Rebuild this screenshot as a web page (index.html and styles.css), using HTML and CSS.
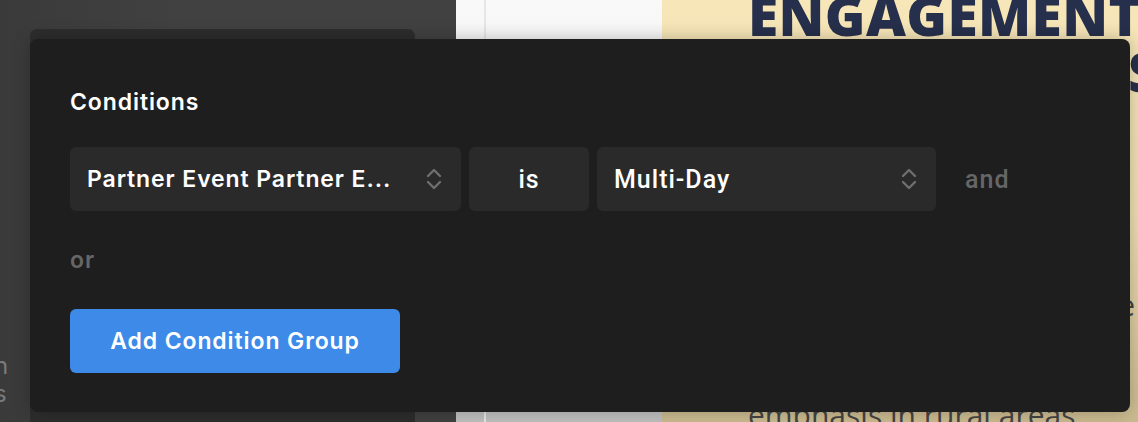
FILE: index.html
```html
<!DOCTYPE html>
<html>
<head>
<meta charset="utf-8">
<link rel="stylesheet" href="styles.css">
</head>
<body>
<div class="page">
  <div class="left">
    <div class="card"></div>
    <div class="left-text"><span>n</span><span>s</span></div>
  </div>
  <div class="white"><div class="rule"></div></div>
  <div class="cream">
    <div class="headline">ENGAGEMENT</div>
    <div class="headline line2">STRATEGIES</div>
    <div class="copy">
      <div class="copy-line l1">programs aim to increase the</div>
      <div class="copy-line l2">participation through outreach to</div>
      <div class="copy-line l3">emphasis in rural areas</div>
    </div>
  </div>
</div>

<div class="modal">
  <h2 class="title">Conditions</h2>
  <div class="cond-row">
    <div class="select field-wide">
      <span class="select-text">Partner Event Partner E...</span>
      <svg class="chev" width="18" height="22" viewBox="0 0 18 22"><path d="M3 8 L9 2 L15 8 M3 14 L9 20 L15 14" fill="none" stroke="#6f6f6f" stroke-width="2.4" stroke-linecap="round" stroke-linejoin="round"/></svg>
    </div>
    <div class="select field-op"><span class="alt-text">is</span></div>
    <div class="select field-val">
      <span class="select-text alt-text">Multi-Day</span>
      <svg class="chev" width="18" height="22" viewBox="0 0 18 22"><path d="M3 8 L9 2 L15 8 M3 14 L9 20 L15 14" fill="none" stroke="#6f6f6f" stroke-width="2.4" stroke-linecap="round" stroke-linejoin="round"/></svg>
    </div>
    <span class="joiner alt-text">and</span>
  </div>
  <div class="or">or</div>
  <button class="add-btn">Add Condition Group</button>
</div>
</body>
</html>
```

FILE: styles.css
```css
* { box-sizing: border-box; }
html, body { margin: 0; padding: 0; }
body {
  width: 1138px;
  height: 422px;
  overflow: hidden;
  position: relative;
  font-family: Inter, "Noto Sans", sans-serif;
}
.page {
  display: grid;
  grid-template-columns: 456px 206px 1fr;
  height: 422px;
}
.left {
  background: linear-gradient(90deg, #3a3a3a 0%, #414141 40%, #414141 100%);
  padding: 29px 41px 0 30px;
  position: relative;
}
.card {
  height: 400px;
  background: #2d2d2d;
  border-radius: 7px;
}
.left-text {
  position: absolute;
  left: -6px;
  top: 352px;
  display: flex;
  flex-direction: column;
  color: #7a7a7a;
  font-size: 24px;
  line-height: 28px;
}
.white {
  background: linear-gradient(180deg, #f9f9f9 0%, #f1f1f1 40%, #d8d8d8 80%, #bdbdbd 100%);
  padding-left: 28px;
}
.rule {
  width: 2px;
  height: 100%;
  background: #e6e6e6;
}
.cream {
  background: linear-gradient(180deg, #f7e6b8 0%, #efdfb2 50%, #c9b98e 100%);
  padding-left: 86px;
  overflow: hidden;
  white-space: nowrap;
}
.headline {
  font-family: "Open Sans", sans-serif;
  font-weight: 800;
  font-size: 55px;
  line-height: 55px;
  color: #262f4b;
  margin-top: -13px;
  letter-spacing: 0.4px;
}
.line2 { margin-left: 380px; margin-top: 1px; }
.copy {
  margin-top: 179px;
  font-family: "Open Sans", sans-serif;
  font-size: 30px;
  color: #444;
  line-height: 55px;
}
.l1 { margin-left: -24px; }
.l2 { margin-left: -92px; }

.modal {
  position: absolute;
  left: 30px;
  top: 39px;
  width: 1100px;
  height: 373px;
  background: #1e1e1e;
  border-radius: 8px;
  padding: 47px 40px 0 40px;
  box-shadow: 0 0 18px rgba(0,0,0,0.25);
  color: #fff;
}
.title {
  margin: 0;
  font-size: 23px;
  letter-spacing: 0.9px;
  font-weight: 600;
  line-height: 32px;
}
.cond-row {
  display: flex;
  align-items: center;
  gap: 9px;
  margin-top: 29px;
}
.select {
  height: 64px;
  background: #2a2a2a;
  border-radius: 6px;
  display: flex;
  align-items: center;
  font-size: 23px;
  letter-spacing: 0.9px;
  font-weight: 600;
}
.field-wide { width: 391px; padding: 0 18px 0 17px; justify-content: space-between; }
.field-op { width: 120px; justify-content: center; margin-left: -1px; }
.field-val { width: 339px; padding: 0 18px 0 17px; justify-content: space-between; margin-left: -1px; }
.alt-text { font-family: Roboto, sans-serif; font-weight: 500; font-size: 25px; letter-spacing: 1px; }
.chev { display: block; }
.joiner { color: #666; margin-left: 20px; }
.or {
  margin-top: 34px;
  color: #666;
  font-size: 23px;
  letter-spacing: 0.9px;
  font-weight: 600;
  line-height: 30px;
}
.add-btn {
  margin-top: 34px;
  width: 330px;
  height: 64px;
  border: none;
  border-radius: 6px;
  background: #3d8ae8;
  color: #fff;
  font-family: Inter, sans-serif;
  font-size: 23px;
  letter-spacing: 0.9px;
  font-weight: 600;
  padding: 0;
}
```
